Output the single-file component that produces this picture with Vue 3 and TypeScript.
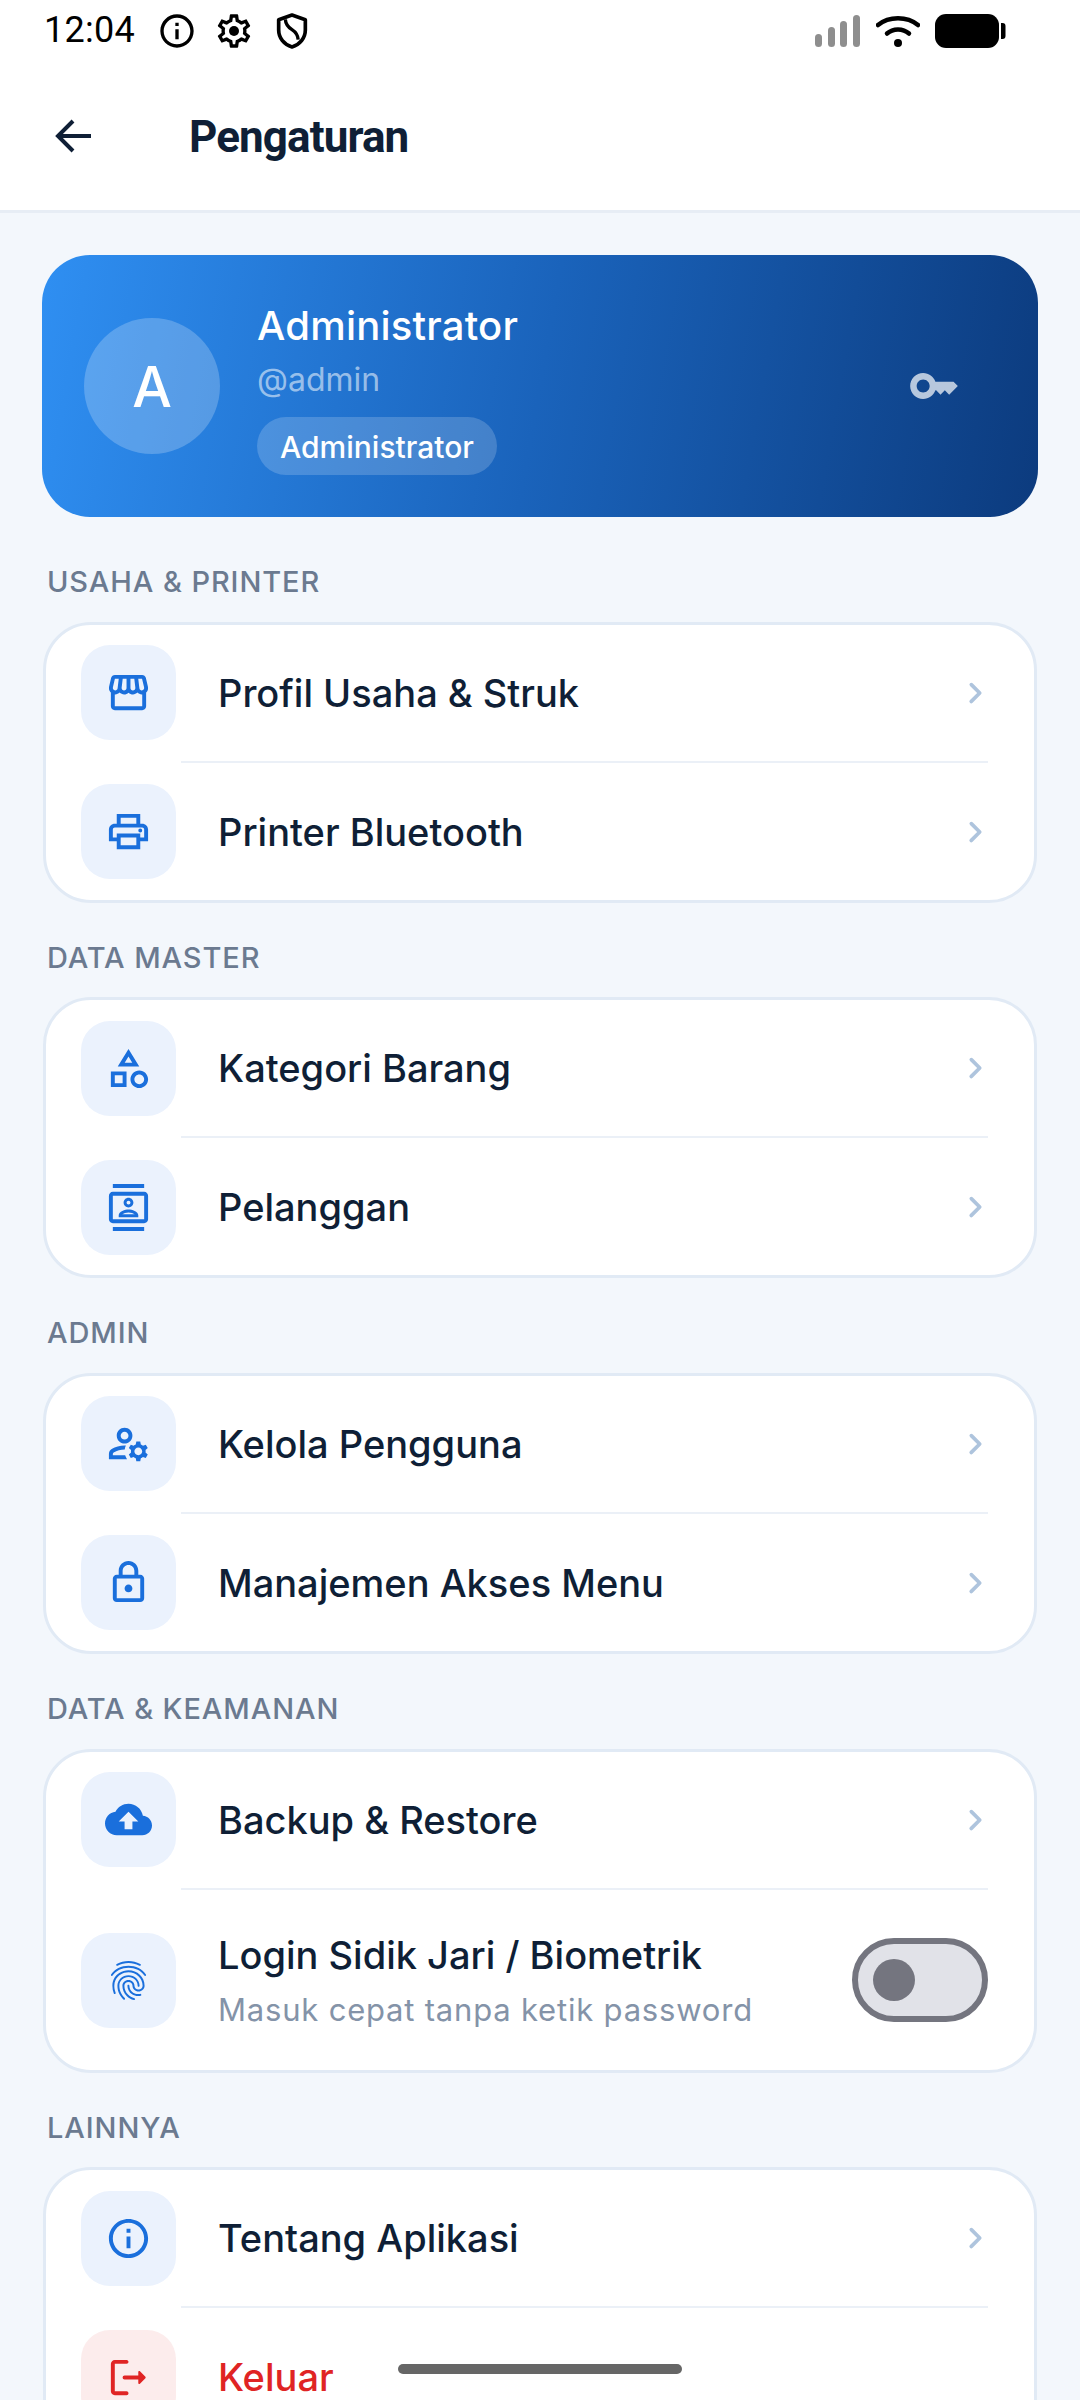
<script setup lang="ts">
interface Row {
  title: string
  sub?: string
  icon: string
  danger?: boolean
  toggle?: boolean
}
interface Section {
  label: string
  rows: Row[]
}
const icons: Record<string, string> = {
  store: 'M21.9 8.89l-1.05-4.37c-.22-.9-1-1.52-1.91-1.52H5.05c-.9 0-1.69.63-1.9 1.52L2.1 8.89c-.24 1.02-.02 2.06.62 2.88.08.11.19.19.28.29V19c0 1.1.9 2 2 2h14c1.1 0 2-.9 2-2v-6.94c.09-.09.2-.18.28-.28.64-.82.87-1.87.62-2.89zm-2.99-3.9l1.05 4.37c.1.42.01.84-.25 1.17-.14.18-.44.47-.94.47-.61 0-1.14-.49-1.21-1.14L16.98 5l1.93-.01zM13 5h1.96l.54 4.52c.05.39-.07.78-.33 1.07-.22.26-.54.41-.95.41-.67 0-1.22-.59-1.22-1.31V5zM8.49 9.52L9.04 5H11v4.69c0 .72-.55 1.31-1.29 1.31-.34 0-.65-.15-.89-.41-.25-.29-.37-.68-.33-1.07zm-4.45-.16L5.05 5h1.97l-.58 4.86c-.08.65-.6 1.14-1.21 1.14-.49 0-.8-.29-.93-.47-.27-.32-.36-.75-.26-1.17zM5 19v-6.03c.08.01.15.03.23.03.87 0 1.66-.36 2.24-.95.6.6 1.4.95 2.31.95.87 0 1.65-.36 2.23-.93.59.57 1.39.93 2.29.93.84 0 1.64-.35 2.24-.95.58.59 1.37.95 2.24.95.08 0 .15-.02.23-.03V19H5z',
  print: 'M19 8h-1V3H6v5H5c-1.66 0-3 1.34-3 3v6h4v4h12v-4h4v-6c0-1.66-1.34-3-3-3zM8 5h8v3H8V5zm8 12v2H8v-4h8v2zm2-2v-2H6v2H4v-4c0-.55.45-1 1-1h14c.55 0 1 .45 1 1v4h-2zM18 10.5a1 1 0 1 1 0 2 1 1 0 0 1 0-2z',
  category: 'M12 2l-5.5 9h11L12 2zm0 3.84L13.93 9h-3.87L12 5.84zM17.5 13c-2.49 0-4.5 2.01-4.5 4.5s2.01 4.5 4.5 4.5 4.5-2.01 4.5-4.5-2.01-4.5-4.5-4.5zm0 7c-1.38 0-2.5-1.12-2.5-2.5s1.12-2.5 2.5-2.5 2.5 1.12 2.5 2.5-1.12 2.5-2.5 2.5zM3 21.5h8v-8H3v8zm2-6h4v4H5v-4z',
  contacts: 'M20 0H4v2h16V0zM4 24h16v-2H4v2zM20 4H4c-1.1 0-2 .9-2 2v12c0 1.1.9 2 2 2h16c1.1 0 2-.9 2-2V6c0-1.1-.9-2-2-2zm0 14H4V6h16v12zm-8-6c1.38 0 2.5-1.12 2.5-2.5S13.38 7 12 7 9.5 8.12 9.5 9.5 10.62 12 12 12zm0-3.5c.55 0 1 .45 1 1s-.45 1-1 1-1-.45-1-1 .45-1 1-1zm5 7.49C17 13.9 13.69 13 12 13s-5 .9-5 2.99V17h10v-1.01zm-8.19-.49c.61-.52 2.03-1 3.19-1 1.17 0 2.59.48 3.2 1H8.81z',
  manage: 'M4 18v-.65c0-.34.16-.66.41-.81C6.1 15.53 8.03 15 10 15c.03 0 .05 0 .08.01.1-.7.3-1.37.59-1.98-.22-.02-.44-.03-.67-.03-2.42 0-4.68.67-6.61 1.82-.88.52-1.39 1.5-1.39 2.53V20h9.26c-.42-.6-.75-1.28-.97-2H4zM10 12c2.21 0 4-1.79 4-4s-1.79-4-4-4-4 1.79-4 4 1.79 4 4 4zm0-6c1.1 0 2 .9 2 2s-.9 2-2 2-2-.9-2-2 .9-2 2-2zM20.75 16c0-.22-.03-.42-.06-.63l1.14-1.01-1-1.73-1.45.49c-.32-.27-.68-.48-1.08-.63L18 11h-2l-.3 1.49c-.4.15-.76.36-1.08.63l-1.45-.49-1 1.73 1.14 1.01c-.03.21-.06.41-.06.63s.03.42.06.63l-1.14 1.01 1 1.73 1.45-.49c.32.27.68.48 1.08.63L16 21h2l.3-1.49c.4-.15.76-.36 1.08-.63l1.45.49 1-1.73-1.14-1.01c.03-.21.06-.41.06-.63zM17 18c-1.1 0-2-.9-2-2s.9-2 2-2 2 .9 2 2-.9 2-2 2z',
  lock: 'M18 8h-1V6c0-2.76-2.24-5-5-5S7 3.24 7 6v2H6c-1.1 0-2 .9-2 2v10c0 1.1.9 2 2 2h12c1.1 0 2-.9 2-2V10c0-1.1-.9-2-2-2zM9 6c0-1.66 1.34-3 3-3s3 1.34 3 3v2H9V6zm9 14H6V10h12v10zm-6-3c1.1 0 2-.9 2-2s-.9-2-2-2-2 .9-2 2 .9 2 2 2z',
  cloud: 'M19.35 10.04C18.67 6.59 15.64 4 12 4 9.11 4 6.6 5.64 5.35 8.04 2.34 8.36 0 10.91 0 14c0 3.31 2.69 6 6 6h13c2.76 0 5-2.24 5-5 0-2.64-2.05-4.78-4.65-4.96zM14 13v4h-4v-4H7l5-5 5 5h-3z',
  finger: 'M17.81 4.47c-.08 0-.16-.02-.23-.06C15.66 3.42 14 3 12.01 3c-1.98 0-3.86.47-5.57 1.41-.24.13-.54.04-.68-.2-.13-.24-.04-.55.2-.68C7.82 2.52 9.86 2 12.01 2c2.13 0 3.99.47 6.03 1.52.25.13.34.43.21.67-.09.18-.26.28-.44.28zM3.5 9.72c-.1 0-.2-.03-.29-.09-.23-.16-.28-.47-.12-.7.99-1.4 2.25-2.5 3.75-3.27C9.98 4.04 14 4.03 17.15 5.65c1.5.77 2.76 1.86 3.75 3.25.16.22.11.54-.12.7-.23.16-.54.11-.7-.12-.9-1.26-2.04-2.25-3.39-2.94-2.87-1.47-6.54-1.47-9.4.01-1.36.7-2.5 1.7-3.4 2.96-.08.14-.23.21-.39.21zm6.25 12.07c-.13 0-.26-.05-.35-.15-.87-.87-1.34-1.43-2.01-2.64-.69-1.23-1.05-2.73-1.05-4.34 0-2.97 2.54-5.39 5.66-5.39s5.66 2.42 5.66 5.39c0 .28-.22.5-.5.5s-.5-.22-.5-.5c0-2.42-2.09-4.39-4.66-4.39-2.57 0-4.66 1.97-4.66 4.39 0 1.44.32 2.77.93 3.85.64 1.15 1.08 1.64 1.85 2.42.19.2.19.51 0 .71-.11.1-.24.15-.37.15zm7.17-1.85c-1.19 0-2.24-.3-3.1-.89-1.49-1.01-2.38-2.65-2.38-4.39 0-.28.22-.5.5-.5s.5.22.5.5c0 1.41.72 2.74 1.94 3.56.71.48 1.54.71 2.54.71.24 0 .64-.03 1.04-.1.27-.05.53.13.58.41.05.27-.13.53-.41.58-.57.11-1.07.12-1.21.12zM14.91 22c-.04 0-.09-.01-.13-.02-1.59-.44-2.63-1.03-3.72-2.1-1.4-1.39-2.17-3.24-2.17-5.22 0-1.62 1.38-2.94 3.08-2.94 1.7 0 3.08 1.32 3.08 2.94 0 1.07.93 1.94 2.08 1.94s2.08-.87 2.08-1.94c0-3.77-3.25-6.83-7.25-6.83-2.84 0-5.44 1.58-6.61 4.03-.39.81-.59 1.76-.59 2.8 0 .78.07 2.01.67 3.61.1.26-.03.55-.29.64-.26.1-.55-.04-.64-.29-.49-1.31-.73-2.61-.73-3.96 0-1.2.23-2.29.68-3.24 1.33-2.79 4.28-4.6 7.51-4.6 4.55 0 8.25 3.51 8.25 7.83 0 1.62-1.38 2.94-3.08 2.94s-3.08-1.32-3.08-2.94c0-1.07-.93-1.94-2.08-1.94s-2.08.87-2.08 1.94c0 1.71.66 3.31 1.87 4.51.95.94 1.86 1.46 3.27 1.85.27.07.42.35.35.61-.05.23-.26.38-.47.38z',
  info: 'M11 7h2v2h-2zm0 4h2v6h-2zm1-9C6.48 2 2 6.48 2 12s4.48 10 10 10 10-4.48 10-10S17.52 2 12 2zm0 18c-4.41 0-8-3.59-8-8s3.59-8 8-8 8 3.59 8 8-3.59 8-8 8z',
  logout: 'M5 5h6c.55 0 1-.45 1-1s-.45-1-1-1H5c-1.1 0-2 .9-2 2v14c0 1.1.9 2 2 2h6c.55 0 1-.45 1-1s-.45-1-1-1H5V5zM20.65 11.65l-2.79-2.79c-.32-.32-.86-.1-.86.35V11h-7c-.55 0-1 .45-1 1s.45 1 1 1h7v1.79c0 .45.54.67.85.35l2.79-2.79c.2-.19.2-.51.01-.7z',
}
const sections: Section[] = [
  { label: 'USAHA & PRINTER', rows: [
    { title: 'Profil Usaha & Struk', icon: 'store' },
    { title: 'Printer Bluetooth', icon: 'print' },
  ] },
  { label: 'DATA MASTER', rows: [
    { title: 'Kategori Barang', icon: 'category' },
    { title: 'Pelanggan', icon: 'contacts' },
  ] },
  { label: 'ADMIN', rows: [
    { title: 'Kelola Pengguna', icon: 'manage' },
    { title: 'Manajemen Akses Menu', icon: 'lock' },
  ] },
  { label: 'DATA & KEAMANAN', rows: [
    { title: 'Backup & Restore', icon: 'cloud' },
    { title: 'Login Sidik Jari / Biometrik', sub: 'Masuk cepat tanpa ketik password', icon: 'finger', toggle: true },
  ] },
  { label: 'LAINNYA', rows: [
    { title: 'Tentang Aplikasi', icon: 'info' },
    { title: 'Keluar', icon: 'logout', danger: true },
  ] },
]
</script>

<template>
  <div class="page">
    <div class="status">
      <span class="time">12:04</span>
      <svg class="si first" viewBox="0 0 24 24"><path d="M11 7h2v2h-2zm0 4h2v6h-2zm1-9C6.48 2 2 6.48 2 12s4.48 10 10 10 10-4.48 10-10S17.52 2 12 2zm0 18c-4.41 0-8-3.59-8-8s3.59-8 8-8 8 3.59 8 8-3.59 8-8 8z" /></svg>
      <svg class="si second" viewBox="0 0 24 24"><path d="M19.43 12.98c.04-.32.07-.64.07-.98 0-.34-.03-.66-.07-.98l2.11-1.65c.19-.15.24-.42.12-.64l-2-3.46c-.09-.16-.26-.25-.44-.25-.06 0-.12.01-.17.03l-2.49 1c-.52-.4-1.08-.73-1.69-.98l-.38-2.65C14.46 2.18 14.25 2 14 2h-4c-.25 0-.46.18-.49.42l-.38 2.65c-.61.25-1.17.59-1.69.98l-2.49-1c-.06-.02-.12-.03-.18-.03-.17 0-.34.09-.43.25l-2 3.46c-.13.22-.07.49.12.64l2.11 1.65c-.04.32-.07.65-.07.98 0 .33.03.66.07.98l-2.11 1.65c-.19.15-.24.42-.12.64l2 3.46c.09.16.26.25.44.25.06 0 .12-.01.17-.03l2.49-1c.52.4 1.08.73 1.69.98l.38 2.65c.03.24.24.42.49.42h4c.25 0 .46-.18.49-.42l.38-2.65c.61-.25 1.17-.59 1.69-.98l2.49 1c.06.02.12.03.18.03.17 0 .34-.09.43-.25l2-3.46c.12-.22.07-.49-.12-.64l-2.11-1.65zm-1.98-1.71c.04.31.05.52.05.73 0 .21-.02.43-.05.73l-.14 1.13.89.7 1.08.84-.7 1.21-1.27-.51-1.04-.42-.9.68c-.43.32-.84.56-1.25.73l-1.06.43-.16 1.13-.2 1.35h-1.4l-.19-1.35-.16-1.13-1.06-.43c-.43-.18-.83-.41-1.23-.71l-.91-.7-1.06.43-1.27.51-.7-1.21 1.08-.84.89-.7-.14-1.13c-.03-.31-.05-.54-.05-.74s.02-.43.05-.73l.14-1.13-.89-.7-1.08-.84.7-1.21 1.27.51 1.04.42.9-.68c.43-.32.84-.56 1.25-.73l1.06-.43.16-1.13.2-1.35h1.39l.19 1.35.16 1.13 1.06.43c.43.18.83.41 1.23.71l.91.7 1.06-.43 1.27-.51.7 1.21-1.07.85-.89.7.14 1.13z" /><circle cx="12" cy="12" r="3" /></svg>
      <svg class="si third" viewBox="0 0 24 24"><path d="M12 2.400 4 5.200v6.200c0 4.800 3.300 8.800 8 10.200 4.700-1.400 8-5.400 8-10.200V5.200z" fill="none" stroke="#000" stroke-width="2.200" stroke-linejoin="round" /><path d="M8 5c.2 3.400 2 4.900 4 6.200 2 1.300 3.500 3 3.700 6" fill="none" stroke="#000" stroke-width="2" /></svg>
      <div class="spacer"></div>
      <svg class="signal" viewBox="0 0 46 32"><rect x="0" y="19" width="7" height="13" rx="3.500" /><rect x="13" y="12" width="7" height="20" rx="3.500" /><rect x="25" y="6" width="7" height="26" rx="3.500" /><rect x="38" y="0" width="7" height="32" rx="3.500" /></svg>
      <svg class="wifi" viewBox="0 0 44 32"><path d="M2 10C13 1 31 1 42 10" fill="none" stroke="#000" stroke-width="4.500" stroke-linecap="round" /><path d="M11 18.500C17 13 27 13 33 18.500" fill="none" stroke="#000" stroke-width="4.500" stroke-linecap="round" /><circle cx="22" cy="28" r="4" /></svg>
      <svg class="batt" viewBox="0 0 72 34"><rect x="0" y="0" width="64" height="34" rx="11" /><path d="M66 9h1.500a3 3 0 0 1 3 3v10a3 3 0 0 1-3 3H66z" /></svg>
    </div>

    <header class="appbar">
      <svg class="back" viewBox="0 0 38 38"><path d="M36 19H4M18 4 3 19l15 15" fill="none" stroke="#0f1f36" stroke-width="4" /></svg>
      <h1 class="title">Pengaturan</h1>
    </header>

    <main class="content">
      <div class="hero">
        <div class="avatar">A</div>
        <div class="hero-info">
          <div class="hero-name">Administrator</div>
          <div class="hero-user">@admin</div>
          <span class="pill">Administrator</span>
        </div>
        <svg class="key" viewBox="0 0 24 24"><path d="M21 10h-8.350C11.830 7.670 9.610 6 7 6c-3.310 0-6 2.690-6 6s2.690 6 6 6c2.610 0 4.830-1.670 5.650-4H13l2 2 2-2 2 2 4-4.040L21 10zM7 15c-1.650 0-3-1.350-3-3s1.350-3 3-3 3 1.350 3 3-1.350 3-3 3z" /></svg>
      </div>

      <section v-for="s in sections" :key="s.label" class="section">
        <div class="label">{{ s.label }}</div>
        <div class="card">
          <div v-for="r in s.rows" :key="r.title" class="row" :class="{ tall: r.sub }">
            <div class="ibox" :class="{ red: r.danger }">
              <svg viewBox="0 0 24 24"><path :d="icons[r.icon]" /></svg>
            </div>
            <div class="body">
              <div class="rtitle" :class="{ red: r.danger }">{{ r.title }}</div>
              <div v-if="r.sub" class="rsub">{{ r.sub }}</div>
            </div>
            <div v-if="r.toggle" class="toggle"><span class="thumb"></span></div>
            <svg v-else-if="!r.danger" class="chev" viewBox="0 0 24 24"><path d="M9.290 6.710a1 1 0 0 0 0 1.410L13.170 12l-3.880 3.880a1 1 0 1 0 1.410 1.410l4.590-4.590a1 1 0 0 0 0-1.410L10.700 6.700a1 1 0 0 0-1.410.010z" /></svg>
          </div>
        </div>
      </section>
    </main>

    <div class="home"></div>
  </div>
</template>

<style>
html, body { margin: 0; background: #f3f7fc; }
</style>

<style scoped>
.page {
  position: relative;
  width: 1080px;
  height: 2400px;
  overflow: hidden;
  background: #f3f7fc;
  font-family: "Inter", "Noto Sans", sans-serif;
}
.status {
  height: 60px;
  background: #fff;
  display: flex;
  align-items: center;
  padding: 2px 75px 0 44px;
  box-sizing: border-box;
}
.time {
  font-family: Roboto, sans-serif;
  font-size: 36px;
  letter-spacing: 0.3px;
  color: #000;
  line-height: 58px;
  margin-top: -2px;
}
.si { width: 40px; height: 40px; flex: none; }
.si.first { margin-left: 22px; }
.si.second { margin-left: 17px; }
.si.third { margin-left: 18px; }
.spacer { flex: 1; }
.signal { width: 46px; height: 32px; fill: #8e8e8e; margin-right: 15px; }
.wifi { width: 44px; height: 32px; margin-right: 15px; }
.batt { width: 72px; height: 34px; margin-right: -2px; }
.appbar {
  height: 150px;
  background: #fff;
  border-bottom: 3px solid #e7edf5;
  display: flex;
  align-items: center;
}
.back { width: 38px; height: 38px; margin: 2px 0 0 55px; }
.title {
  margin: 4px 0 0 96px;
  font-family: Roboto, sans-serif;
  font-size: 44px;
  font-weight: 700;
  letter-spacing: -0.9px;
  color: #0f1f36;
}
.content {
  padding: 42px 42px 0;
}
.hero {
  height: 262px;
  margin-bottom: 10px;
  border-radius: 48px;
  background: linear-gradient(100deg, #2f8ff2 0%, #1a63bb 50%, #0c3b7e 100%);
  display: flex;
  align-items: center;
  padding: 0 78px 0 42px;
  box-sizing: border-box;
  color: #fff;
}
.avatar {
  width: 136px;
  height: 136px;
  border-radius: 50%;
  background: rgba(255, 255, 255, 0.22);
  display: flex;
  align-items: center;
  justify-content: center;
  font-size: 56px;
  font-weight: 500;
  padding-top: 2px;
  box-sizing: border-box;
  flex: none;
}
.hero-info {
  flex: 1;
  margin-left: 37px;
  display: flex;
  flex-direction: column;
  align-items: flex-start;
  padding-top: 3px;
}
.hero-name { font-size: 40px; font-weight: 500; line-height: 52px; letter-spacing: 0.2px; }
.hero-user { font-size: 32px; line-height: 40px; margin-top: 8px; color: rgba(255, 255, 255, 0.55); }
.pill {
  margin-top: 17px;
  height: 58px;
  line-height: 60px;
  padding: 0 23px;
  border-radius: 29px;
  background: rgba(255, 255, 255, 0.18);
  font-size: 30px;
  font-weight: 500;
}
.key { width: 52px; height: 52px; fill: rgba(255, 255, 255, 0.7); }
.label {
  margin-left: 5px;
  height: 94.67px;
  box-sizing: border-box;
  padding-top: 37px;
  font-size: 29px;
  line-height: 36px;
  font-weight: 500;
  color: #6b7a90;
  letter-spacing: 0.9px;
}
.card {
  margin: 0 1px;
  background: #fff;
  border: 3px solid #e1eaf5;
  border-radius: 48px;
  overflow: hidden;
}
.row {
  height: 136px;
  display: flex;
  align-items: center;
  padding: 0 37px 0 35px;
  position: relative;
  box-sizing: border-box;
}
.row + .row {
  height: 139px;
  padding-top: 3px;
}
.row + .row.tall { height: 182px; }
.row + .row::before {
  content: "";
  position: absolute;
  left: 135px;
  right: 46px;
  top: 0;
  height: 2px;
  background: #ebf0f7;
}
.ibox {
  width: 95px;
  height: 95px;
  border-radius: 29px;
  background: #ebf2fd;
  display: flex;
  align-items: center;
  justify-content: center;
  flex: none;
}
.ibox svg { width: 47px; height: 47px; fill: #1a6fdc; }
.ibox.red { background: #fcecec; }
.ibox.red svg { fill: #e02424; }
.body { flex: 1; margin-left: 42px; min-width: 0; }
.rtitle { font-size: 38px; font-weight: 500; color: #0f1f36; line-height: 48px; }
.rtitle.red { color: #e02424; }
.rsub { font-size: 31px; color: #8493a8; line-height: 40px; margin-top: 11px; letter-spacing: 0.8px; }
.chev { width: 44px; height: 44px; fill: #aec4dd; flex: none; }
.toggle {
  width: 136px;
  height: 84px;
  box-sizing: border-box;
  border: 6px solid #74757f;
  border-radius: 42px;
  background: #e1e2e8;
  display: flex;
  align-items: center;
  padding-left: 15px;
  flex: none;
  margin-right: 9px;
}
.thumb { width: 42px; height: 42px; border-radius: 50%; background: #74757f; }
.home {
  position: absolute;
  left: 398px;
  top: 2364px;
  width: 284px;
  height: 10px;
  border-radius: 5px;
  background: #666;
}
</style>
